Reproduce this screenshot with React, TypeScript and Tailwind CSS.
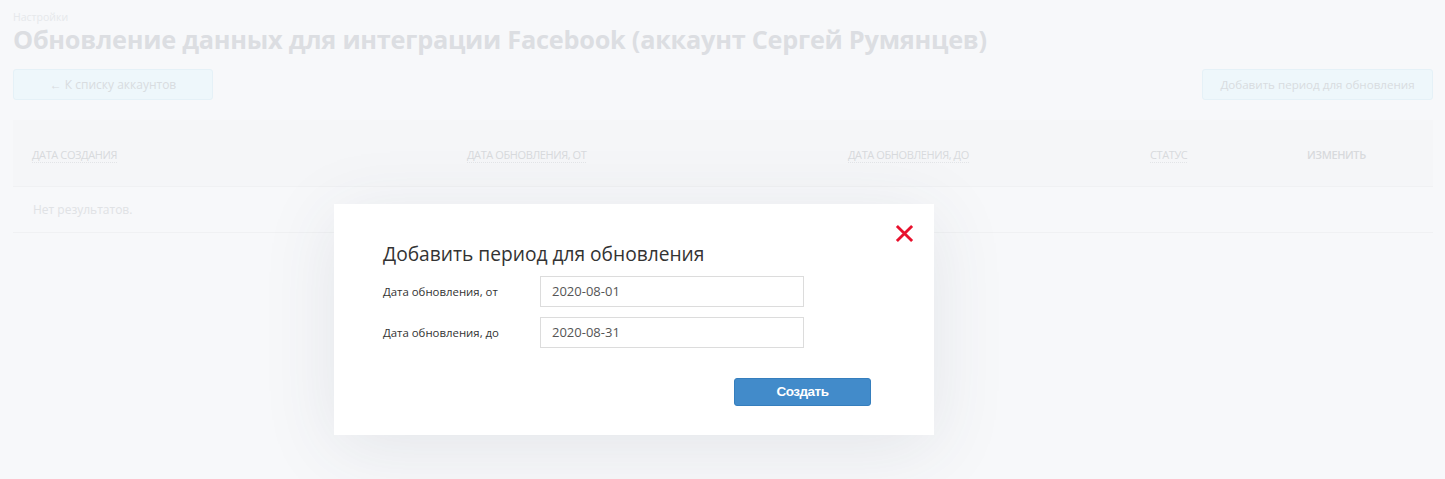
import React from "react";

export default function App() {
  const headers = [
    { t: "ДАТА СОЗДАНИЯ", w: "w-[435px]" },
    { t: "ДАТА ОБНОВЛЕНИЯ, ОТ", w: "w-[381px]" },
    { t: "ДАТА ОБНОВЛЕНИЯ, ДО", w: "w-[302px]" },
    { t: "СТАТУС", w: "w-[157px]" },
    { t: "ИЗМЕНИТЬ", w: "flex-1" },
  ];
  return (
    <div
      className="relative h-[479px] w-full overflow-hidden bg-[#f7f8fa] pl-[13px] pr-[12px]"
      style={{ fontFamily: '"Open Sans", sans-serif' }}
    >
      <div className="pt-[11px] text-[10.5px] leading-[13px] text-[#e6e8eb]">Настройки</div>
      <h1 className="mt-[0px] text-[25.3px] font-bold leading-[30px] tracking-[-0.25px] text-[#dcdee2]">
        Обновление данных для интеграции Facebook (аккаунт Сергей Румянцев)
      </h1>
      <div className="mt-[15px] flex items-center justify-between">
        <div className="flex h-[31px] w-[200px] items-center justify-center rounded-[3px] border border-[#e5f1f7] bg-[#eef7fb] text-[12px] text-[#d8dce0]">
          ← К списку аккаунтов
        </div>
        <div className="flex h-[31px] w-[231px] items-center justify-center rounded-[3px] border border-[#e5f1f7] bg-[#eef7fb] text-[11.6px] text-[#d8dce0]">
          Добавить период для обновления
        </div>
      </div>
      <div className="mt-[20px]">
        <div className="flex h-[67px] items-center border-b border-[#f0f1f3] bg-[#f5f6f8] pl-[19px]">
          {headers.map((h) => (
            <div key={h.t} className={h.w}>
              <span
                className={
                  "text-[11px] tracking-[-0.4px] text-[#d8dadd] " +
                  (h.t === "ИЗМЕНИТЬ" ? "font-semibold" : "border-b border-dotted border-[#e2e4e7]")
                }
              >
                {h.t}
              </span>
            </div>
          ))}
        </div>
        <div className="flex h-[46px] items-center border-b border-[#f0f1f3] pl-[20px] text-[12px] text-[#e0e2e5]">
          Нет результатов.
        </div>
      </div>

      <div className="absolute left-[334px] top-[204px] h-[231px] w-[600px] bg-white px-[49px] pt-[37px] shadow-[0_12px_70px_rgba(60,70,90,0.1)]">
        <button className="absolute right-[19px] top-[18px] flex h-[22px] w-[22px] items-center justify-center">
          <svg width="19" height="19" viewBox="0 0 20 20">
            <path d="M2 2 L18 18 M18 2 L2 18" stroke="#e8112d" strokeWidth="3" strokeLinecap="butt" />
          </svg>
        </button>
        <div className="text-[19.2px] leading-[25px] text-[#333]">Добавить период для обновления</div>
        <div className="mt-[10px] flex flex-col gap-[10px]">
          <div className="flex items-center">
            <div className="w-[157px] text-[11.4px] text-[#333]">Дата обновления, от</div>
            <div className="flex h-[31px] w-[264px] items-center border border-[#dcdcdc] px-[11px] text-[13px] text-[#555]">
              2020-08-01
            </div>
          </div>
          <div className="flex items-center">
            <div className="w-[157px] text-[11.4px] text-[#333]">Дата обновления, до</div>
            <div className="flex h-[31px] w-[264px] items-center border border-[#dcdcdc] px-[11px] text-[13px] text-[#555]">
              2020-08-31
            </div>
          </div>
        </div>
        <div className="mt-[30px] flex justify-end pr-[14px]">
          <div
            className="flex h-[28px] w-[137px] items-center justify-center rounded-[3px] border border-[#357ebd] bg-[#428bca] text-[13.5px] font-bold tracking-[-0.5px] text-white"
            style={{ fontFamily: '"Liberation Sans", Arial, sans-serif' }}
          >
            Создать
          </div>
        </div>
      </div>
    </div>
  );
}
